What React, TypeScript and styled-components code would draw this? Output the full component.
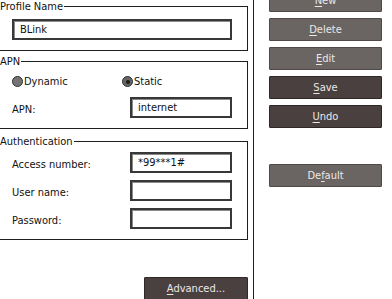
import React from "react";
import styled, {createGlobalStyle, css} from "styled-components";

const GlobalStyle = createGlobalStyle`
  html, body {
    margin: 0;
    background: #ffffff;
    overflow: hidden;
  }
  body {
    font-family: "DejaVu Sans Condensed", "DejaVu Sans", "Liberation Sans", sans-serif;
    font-size: 11px;
    color: #111;
  }
`;

export default function App() {
  return (
    <>
      <GlobalStyle/>
      <Screen>
        <LeftPane>
          <Group>
            <Legend>Profile Name</Legend>
            <ProfileRow>
              <TextBox value="BLink" wide/>
            </ProfileRow>
          </Group>

          <Group gap={4}>
            <Legend>APN</Legend>
            <RadioRow>
              <RadioOption>
                <RadioDot/>
                Dynamic
              </RadioOption>
              <RadioOption>
                <RadioDot checked/>
                Static
              </RadioOption>
            </RadioRow>
            <FieldRow>
              <FieldLabel>APN:</FieldLabel>
              <TextBox value="internet"/>
            </FieldRow>
          </Group>

          <Group gap={6}>
            <Legend>Authentication</Legend>
            <Fields>
              <FieldRow>
                <FieldLabel>Access number:</FieldLabel>
                <TextBox value="*99***1#"/>
              </FieldRow>
              <FieldRow>
                <FieldLabel>User name:</FieldLabel>
                <TextBox value=""/>
              </FieldRow>
              <FieldRow>
                <FieldLabel>Password:</FieldLabel>
                <TextBox value=""/>
              </FieldRow>
            </Fields>
          </Group>

          <AdvancedRow>
            <Button dark wide={104}><u>A</u>dvanced...</Button>
          </AdvancedRow>
        </LeftPane>

        <Separator/>

        <ButtonColumn>
          <Button><u>N</u>ew</Button>
          <Button><u>D</u>elete</Button>
          <Button><u>E</u>dit</Button>
          <Button dark><u>S</u>ave</Button>
          <Button dark><u>U</u>ndo</Button>
          <Spacer/>
          <Button>De<u>f</u>ault</Button>
        </ButtonColumn>
      </Screen>
    </>
  );
}

const TextBox = ({value, wide}: {value: string; wide?: boolean}) => (
  <Input wide={wide}>{value}</Input>
);

const Screen = styled.div`
  display: flex;
  width: 392px;
  height: 299px;
  overflow: hidden;
`;

const LeftPane = styled.div`
  display: flex;
  flex-direction: column;
  width: 256px;
  margin-left: -8px;
  flex-shrink: 0;
`;

const Group = styled.fieldset<{gap?: number}>`
  margin: ${({gap}) => gap || 0}px 0 0 0;
  padding: 0 15px 10px 7px;
  border: 1px solid #1e1e1e;
  min-width: 0;
`;

const Legend = styled.legend`
  padding: 0 1px 0 0;
  line-height: 13px;
  color: #111;
`;

const ProfileRow = styled.div`
  padding: 6px 0 0 12px;
`;

const Input = styled.div<{wide?: boolean}>`
  box-sizing: border-box;
  width: ${({wide}) => wide ? "220px" : "102px"};
  height: 21px;
  border: 2px solid #383838;
  box-shadow: inset 1px 1px 0 #8a8a8a;
  padding: 2px 0 0 6px;
  line-height: 14px;
  color: #111;
  background: #fff;
  white-space: nowrap;
`;

const RadioRow = styled.div`
  display: flex;
  padding: 7px 0 0 12px;
  height: 13px;
  align-items: center;
`;

const RadioOption = styled.label`
  display: flex;
  align-items: center;
  width: 110px;
  line-height: 13px;
`;

const RadioDot = styled.span<{checked?: boolean}>`
  box-sizing: border-box;
  width: 11px;
  height: 11px;
  border-radius: 50%;
  border: 1px solid #2e2e2e;
  background: #747474;
  margin-right: 1px;
  display: flex;
  align-items: center;
  justify-content: center;
  ${({checked}) => checked && css`
    background: #666;
    &::after {
      content: "";
      width: 4px;
      height: 4px;
      border-radius: 50%;
      background: #1a1a1a;
    }
  `}
`;

const Fields = styled.div`
  display: flex;
  flex-direction: column;
  gap: 7px;
  padding-top: 4px;
`;

const FieldRow = styled.div`
  display: flex;
  align-items: center;
  padding-left: 12px;
  margin-top: 9px;
  ${Fields} & {
    margin-top: 0;
  }
`;

const FieldLabel = styled.span`
  width: 118px;
  padding-top: 3px;
`;

const AdvancedRow = styled.div`
  display: flex;
  justify-content: flex-end;
  margin-top: 37px;
`;

const Separator = styled.div`
  width: 1px;
  background: #1e1e1e;
  margin-left: 5px;
  flex-shrink: 0;
`;

const ButtonColumn = styled.div`
  display: flex;
  flex-direction: column;
  gap: 6px;
  margin: -11px 0 0 15px;
`;

const Spacer = styled.div`
  height: 24px;
`;

const Button = styled.button<{dark?: boolean; wide?: number}>`
  box-sizing: border-box;
  width: ${({wide}) => wide || 113}px;
  height: 23px;
  padding: 1px 0 0;
  border: 1px solid ${({dark}) => dark ? "#2f2828" : "#4f4a48"};
  border-radius: 1px;
  background: ${({dark}) => dark ? "#4a403f" : "#6a6462"};
  color: #ece8e6;
  font-family: inherit;
  font-size: 11px;
  line-height: 20px;
  text-align: center;
  flex-shrink: 0;
  u {
    text-decoration-thickness: 1px;
    text-underline-offset: 2px;
  }
`;
